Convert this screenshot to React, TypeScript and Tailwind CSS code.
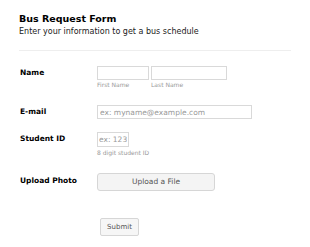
export default function App() {
  return (
    <div
      className="w-[310px] h-[247px] bg-white text-black overflow-hidden"
      style={{ fontFamily: '"DejaVu Sans", Verdana, sans-serif' }}
    >
      <div className="pl-[19px] pr-[19px] pt-[13px]">
        {/* Header */}
        <h1 className="text-[9.5px] font-bold leading-[12px]">Bus Request Form</h1>
        <p className="text-[8px] leading-[10px] mt-[2px] text-[#222]">
          Enter your information to get a bus schedule
        </p>
        <div className="mt-[13px] border-t border-[#eeeeee]" />

        {/* Name */}
        <div className="flex mt-[15px] h-[39px]">
          <label className="w-[78px] shrink-0 pl-[1px] pt-[2px] text-[7.5px] font-bold leading-[10px]">Name</label>
          <div className="flex gap-[2px]">
            <div className="flex flex-col">
              <input className="w-[52px] h-[14px] border border-[#d9d9d9] bg-white outline-none" />
              <span className="text-[6px] leading-[8px] text-[#999] mt-[1px]">First Name</span>
            </div>
            <div className="flex flex-col">
              <input className="w-[76px] h-[14px] border border-[#d9d9d9] bg-white outline-none" />
              <span className="text-[6px] leading-[8px] text-[#999] mt-[1px]">Last Name</span>
            </div>
          </div>
        </div>

        {/* E-mail */}
        <div className="flex h-[27px]">
          <label className="w-[78px] shrink-0 pl-[1px] pt-[2px] text-[7.5px] font-bold leading-[10px]">E-mail</label>
          <input
            placeholder="ex: myname@example.com"
            className="w-[155px] h-[14px] border border-[#d9d9d9] px-[2px] text-[7.5px] leading-[10px] placeholder:text-[#999] outline-none"
          />
        </div>

        {/* Student ID */}
        <div className="flex h-[41px]">
          <label className="w-[78px] shrink-0 pl-[1px] pt-[2px] text-[7.5px] font-bold leading-[10px]">Student ID</label>
          <div className="flex flex-col">
            <input
              placeholder="ex: 12345678"
              className="w-[32px] h-[15px] border border-[#d9d9d9] px-[1px] text-[7.5px] leading-[10px] placeholder:text-[#999] outline-none"
            />
            <span className="text-[6px] leading-[8px] text-[#999] mt-[2px]">8 digit student ID</span>
          </div>
        </div>

        {/* Upload Photo */}
        <div className="flex h-[45px]">
          <label className="w-[78px] shrink-0 pl-[1px] pt-[3px] text-[7.5px] font-bold leading-[10px]">Upload Photo</label>
          <button className="w-[118px] h-[18px] rounded-[3px] border border-[#d6d6d6] bg-[#f4f4f4] text-[7.5px] text-[#555]">
            Upload a File
          </button>
        </div>

        {/* Submit */}
        <div className="flex pl-[81px]">
          <button className="w-[39px] h-[18px] rounded-[2px] border border-[#d6d6d6] bg-[#f6f6f6] text-[7px] text-[#555]">
            Submit
          </button>
        </div>
      </div>
    </div>
  );
}
